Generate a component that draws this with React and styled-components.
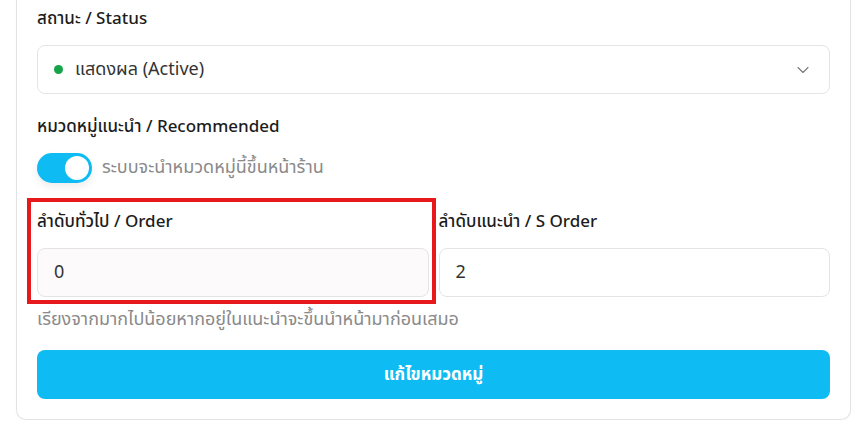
import React, { useState } from 'react'
import styled, { createGlobalStyle } from 'styled-components'
import { ChevronDown } from 'lucide-react'

const GlobalStyle = createGlobalStyle`
  html, body {
    margin: 0;
    padding: 0;
    background: #ffffff;
  }
  body {
    font-family: "Noto Sans Thai", "Noto Sans", "Liberation Sans", sans-serif;
    color: #1f1f1f;
  }
  * { box-sizing: border-box; }
`

const Page = styled.div`
  padding: 0 15px 0 16px;
`

const Card = styled.div`
  border: 1px solid #e3e3e3;
  border-top: none;
  border-radius: 0 0 10px 10px;
  padding: 7px 20px 20px;
  box-shadow: 0 1px 2px rgba(0, 0, 0, 0.04);
`

const Field = styled.div`
  position: relative;
  display: flex;
  flex-direction: column;
  gap: 14px;
  margin-top: ${p => p.$top || 0}px;

  ${p => p.$highlight && `
    &::after {
      content: "";
      position: absolute;
      left: -10px;
      right: -7px;
      top: -12px;
      bottom: -7px;
      border: 4px solid #e8191c;
      pointer-events: none;
    }
  `}
`

const Label = styled.div`
  font-size: 17px;
  line-height: 24px;
  font-weight: 500;
  color: #1c1c1c;
`

const SelectBox = styled.div`
  height: 49px;
  border: 1px solid #e4e4e4;
  border-radius: 8px;
  display: flex;
  align-items: center;
  padding: 0 16px 0 16px;
  font-size: 18px;
  color: #333;
`

const Dot = styled.span`
  width: 9px;
  height: 9px;
  border-radius: 50%;
  background: #16a34a;
  margin: 0 12px 0 0;
  flex: none;
`

const SelectText = styled.span`
  flex: 1;
`

const ToggleRow = styled.div`
  display: flex;
  align-items: center;
  gap: 10px;
`

const Track = styled.button`
  width: 55px;
  height: 30px;
  border: none;
  border-radius: 15px;
  padding: 3px;
  background: ${p => (p.$on ? '#0ebbf2' : '#d4d4d4')};
  display: flex;
  justify-content: ${p => (p.$on ? 'flex-end' : 'flex-start')};
  cursor: pointer;
  box-shadow: 0 4px 8px rgba(0, 0, 0, 0.08);
`

const Knob = styled.span`
  width: 24px;
  height: 24px;
  border-radius: 50%;
  background: #fff;
`

const Hint = styled.span`
  font-size: 18px;
  line-height: 24px;
  color: #8a8a8a;
`

const Grid = styled.div`
  display: grid;
  grid-template-columns: 1fr 1fr;
  column-gap: 10px;
  margin-top: 27px;
`

const Input = styled.input`
  height: 49px;
  width: 100%;
  border: 1px solid #e4e4e4;
  border-radius: 8px;
  padding: 0 16px;
  font-family: inherit;
  font-size: 18px;
  color: #333;
  background: ${p => p.$tint ? '#fdfafb' : '#fff'};
  outline: none;
`

const Help = styled.div`
  font-size: 18px;
  line-height: 24px;
  color: #8a8a8a;
  margin-top: 11px;
`

const SubmitButton = styled.button`
  margin-top: 18px;
  height: 49px;
  width: 100%;
  border: none;
  border-radius: 8px;
  background: #0ebbf2;
  color: #fff;
  font-family: inherit;
  font-size: 17px;
  font-weight: 700;
  cursor: pointer;
`

export default function App() {
  const [on, setOn] = useState(true)
  return (
    <Page>
      <GlobalStyle />
      <Card>
        <Field>
          <Label>สถานะ / Status</Label>
          <SelectBox>
            <Dot />
            <SelectText>แสดงผล (Active)</SelectText>
            <ChevronDown size={20} strokeWidth={1.3} color="#777" />
          </SelectBox>
        </Field>

        <Field $top={21}>
          <Label>หมวดหมู่แนะนำ / Recommended</Label>
          <ToggleRow>
            <Track $on={on} onClick={() => setOn(!on)}>
              <Knob />
            </Track>
            <Hint>ระบบจะนำหมวดหมู่นี้ขึ้นหน้าร้าน</Hint>
          </ToggleRow>
        </Field>

        <Grid>
          <Field $highlight>
            <Label>ลำดับทั่วไป / Order</Label>
            <Input $tint defaultValue="0" />
          </Field>
          <Field>
            <Label>ลำดับแนะนำ / S Order</Label>
            <Input defaultValue="2" />
          </Field>
        </Grid>

        <Help>เรียงจากมากไปน้อยหากอยู่ในแนะนำจะขึ้นนำหน้ามาก่อนเสมอ</Help>

        <SubmitButton>แก้ไขหมวดหมู่</SubmitButton>
      </Card>
    </Page>
  )
}
